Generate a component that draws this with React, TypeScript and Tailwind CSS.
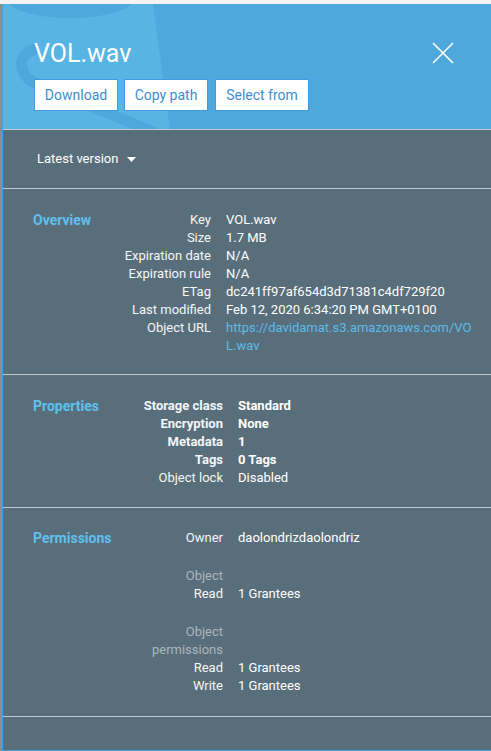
import React from 'react';

type Item = {
  label: string;
  value?: string;
  bold?: boolean;
  muted?: boolean;
  link?: boolean;
  spacer?: boolean;
};

const overview: Item[] = [
  { label: 'Key', value: 'VOL.wav' },
  { label: 'Size', value: '1.7 MB' },
  { label: 'Expiration date', value: 'N/A' },
  { label: 'Expiration rule', value: 'N/A' },
  { label: 'ETag', value: 'dc241ff97af654d3d71381c4df729f20' },
  { label: 'Last modified', value: 'Feb 12, 2020 6:34:20 PM GMT+0100' },
  { label: 'Object URL', value: 'https://davidamat.s3.amazonaws.com/VOL.wav', link: true },
];

const properties: Item[] = [
  { label: 'Storage class', value: 'Standard', bold: true },
  { label: 'Encryption', value: 'None', bold: true },
  { label: 'Metadata', value: '1', bold: true },
  { label: 'Tags', value: '0 Tags', bold: true },
  { label: 'Object lock', value: 'Disabled' },
];

const permissions: Item[] = [
  { label: 'Owner', value: 'daolondrizdaolondriz' },
  { label: '', spacer: true },
  { label: 'Object', muted: true },
  { label: 'Read', value: '1 Grantees' },
  { label: '', spacer: true },
  { label: 'Object permissions', muted: true },
  { label: 'Read', value: '1 Grantees' },
  { label: 'Write', value: '1 Grantees' },
];

const Section = ({
  title,
  items,
  labelWidth,
  className,
}: {
  title: string;
  items: Item[];
  labelWidth: 'narrow' | 'wide';
  className: string;
}) => (
  <div className={`flex border-b border-[#bfc8cd] pl-[30px] ${className}`}>
    <div className="w-[90px] shrink-0 text-[14px] leading-[18px] font-bold text-[#5fc0ee]">{title}</div>
    <div
      className={`grid gap-x-[15px] text-[13px] leading-[18px] ${
        labelWidth === 'narrow' ? 'grid-cols-[88px_248px]' : 'grid-cols-[100px_236px]'
      }`}
    >
      {items.map((it, i) =>
        it.spacer ? (
          <div key={i} className="col-span-2 h-[20px]" />
        ) : (
          <React.Fragment key={i}>
            <div
              className={`text-right ${
                it.muted ? 'text-[#aab6bd]' : 'text-[#f4f6f7]'
              } ${it.bold ? 'font-bold' : ''}`}
            >
              {it.label}
            </div>
            <div
              className={`${it.link ? 'break-all text-[#5cbbea]' : 'text-white'} ${
                it.bold ? 'font-bold' : ''
              }`}
            >
              {it.value}
            </div>
          </React.Fragment>
        )
      )}
    </div>
  </div>
);

const Bucket = () => (
  <svg className="absolute left-0 top-0" width="180" height="125" viewBox="0 0 180 125">
    <path d="M0 0 L150 0 L167 125 L0 125 Z" fill="#58b4e3" />
    <ellipse cx="67" cy="-6" rx="64" ry="20" fill="#4ea8dc" />
    <path
      d="M30 46 C14 50 14 74 36 80 L150 128"
      fill="none"
      stroke="#4ea8dc"
      strokeWidth="11"
      strokeLinecap="round"
    />
  </svg>
);

export default function App() {
  return (
    <div className="min-h-screen bg-[#f3f3f3] pt-1 font-[Roboto,sans-serif]">
      <div className="flex">
        <div className="w-[2px] shrink-0 bg-[#8d8d8d]" />
        <div className="flex-1 border-l border-b border-[#43a2e0] bg-[#596e7b]">
          {/* Header */}
          <div className="relative h-[126px] overflow-hidden border-b border-[#c3cbd0] bg-[#4ea8dc]">
            <Bucket />
            <div className="relative flex items-start justify-between pl-[31px] pr-[37px] pt-[35px]">
              <div>
                <h1 className="text-[25px] leading-[30px] text-white">VOL.wav</h1>
                <div className="mt-[10px] flex">
                  <button className="mr-[6px] h-[32px] w-[84px] border border-[#3f9ce0] bg-white text-[14px] text-[#3a8fd3]">
                    Download
                  </button>
                  <button className="mr-[7px] h-[32px] w-[84px] border border-[#3f9ce0] bg-white text-[14px] text-[#3a8fd3]">
                    Copy path
                  </button>
                  <button className="h-[32px] w-[94px] border border-[#3f9ce0] bg-white text-[14px] text-[#3a8fd3]">
                    Select from
                  </button>
                </div>
              </div>
              <svg className="mt-[3px]" width="22" height="22" viewBox="0 0 22 22">
                <path d="M1 1 L21 21 M21 1 L1 21" stroke="white" strokeWidth="1.6" />
              </svg>
            </div>
          </div>

          {/* Version */}
          <div className="flex items-center border-b border-[#bfc8cd] pl-[34px] pt-[20px] pb-[20px] text-[13px] leading-[18px] text-white">
            Latest version
            <svg className="ml-[9px]" width="9" height="5" viewBox="0 0 9 5">
              <path d="M0 0 L9 0 L4.5 5 Z" fill="white" />
            </svg>
          </div>

          <Section title="Overview" items={overview} labelWidth="narrow" className="pt-[22px] pb-[19px]" />
          <Section title="Properties" items={properties} labelWidth="wide" className="pt-[22px] pb-[20px]" />
          <Section title="Permissions" items={permissions} labelWidth="wide" className="pt-[21px] pb-[21px]" />

          <div className="h-[33px]" />
        </div>
      </div>
    </div>
  );
}
